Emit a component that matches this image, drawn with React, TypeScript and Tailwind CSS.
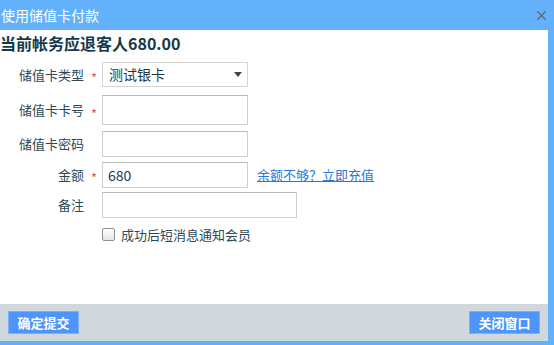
import { X } from "lucide-react";

const font = { fontFamily: '"Microsoft YaHei", "Noto Sans CJK SC", "Noto Sans", sans-serif' };

function Label({ text, required }: { text: string; required?: boolean }) {
  return (
    <div className="flex w-[102px] shrink-0 items-center">
      <span className="w-[84px] text-right text-[13px] text-[#2f4854]">{text}</span>
      <span className="w-[18px] pl-[7px] pt-[6px] text-[13px] leading-none text-[#e05a5a]">{required ? "*" : ""}</span>
    </div>
  );
}

const inputCls =
  "h-[26px] border border-[#cfcfcf] border-t-[#b9b9b9] bg-white px-[5px] text-[14px] text-[#1f3a46] outline-none";

export default function App() {
  return (
    <div className="flex h-[345px] w-[554px] flex-col bg-[#63b1fb]" style={font}>
      {/* title bar */}
      <div className="flex h-[30px] shrink-0 items-center justify-between pl-[1px] pr-[5px]">
        <span className="text-[14px] text-white">使用储值卡付款</span>
        <X className="h-[15px] w-[15px] text-[#6b6b6b]" strokeWidth={2.4} />
      </div>

      <div className="mb-[4px] mr-[6px] flex flex-1 flex-col">
        {/* content */}
        <div className="flex-1 bg-white">
          <h1 className="pt-[2px] text-[16px] font-bold leading-[22px] text-[#16394a]">当前帐务应退客人680.00</h1>

          <div className="mt-[8px] flex flex-col">
            <div className="flex h-[25px] items-center">
              <Label text="储值卡类型" required />
              <div className="flex h-[25px] w-[146px] items-center justify-between border border-[#d4d4d4] bg-white pl-[6px] pr-[5px]">
                <span className="text-[14px] text-[#1f3a46]">测试银卡</span>
                <svg width="8" height="5" viewBox="0 0 8 5">
                  <path d="M0 0h8L4 5z" fill="#444" />
                </svg>
              </div>
            </div>

            <div className="mt-[8px] flex h-[30px] items-center">
              <Label text="储值卡卡号" required />
              <input className={`${inputCls} h-[30px] w-[146px]`} />
            </div>

            <div className="mt-[6px] flex h-[26px] items-center">
              <Label text="储值卡密码" />
              <input className={`${inputCls} w-[146px]`} />
            </div>

            <div className="mt-[5px] flex h-[25px] items-center">
              <Label text="金额" required />
              <input className={`${inputCls} h-[25px] w-[146px]`} defaultValue="680" />
              <a className="ml-[9px] text-[13px] text-[#2a78d6] underline">余额不够？立即充值</a>
            </div>

            <div className="mt-[5px] flex h-[25px] items-center">
              <Label text="备注" />
              <input className={`${inputCls} h-[25px] w-[195px]`} />
            </div>

            <div className="mt-[8px] flex items-center pl-[102px]">
              <span className="h-[13px] w-[13px] rounded-[2px] border border-[#8f8f8f] bg-gradient-to-b from-white to-[#e6e6e6]" />
              <span className="ml-[6px] text-[13px] text-[#2f4854]">成功后短消息通知会员</span>
            </div>
          </div>
        </div>

        {/* footer */}
        <div className="flex h-[37px] shrink-0 items-center justify-between bg-[#d0d7dd] px-[8px]">
          <button className="h-[23px] w-[71px] border border-[#7fb0f6] bg-[#4d95fb] text-[13px] font-bold text-white">
            确定提交
          </button>
          <button className="h-[23px] w-[71px] border border-[#7fb0f6] bg-[#4d95fb] text-[13px] font-bold text-white">
            关闭窗口
          </button>
        </div>
      </div>
    </div>
  );
}
